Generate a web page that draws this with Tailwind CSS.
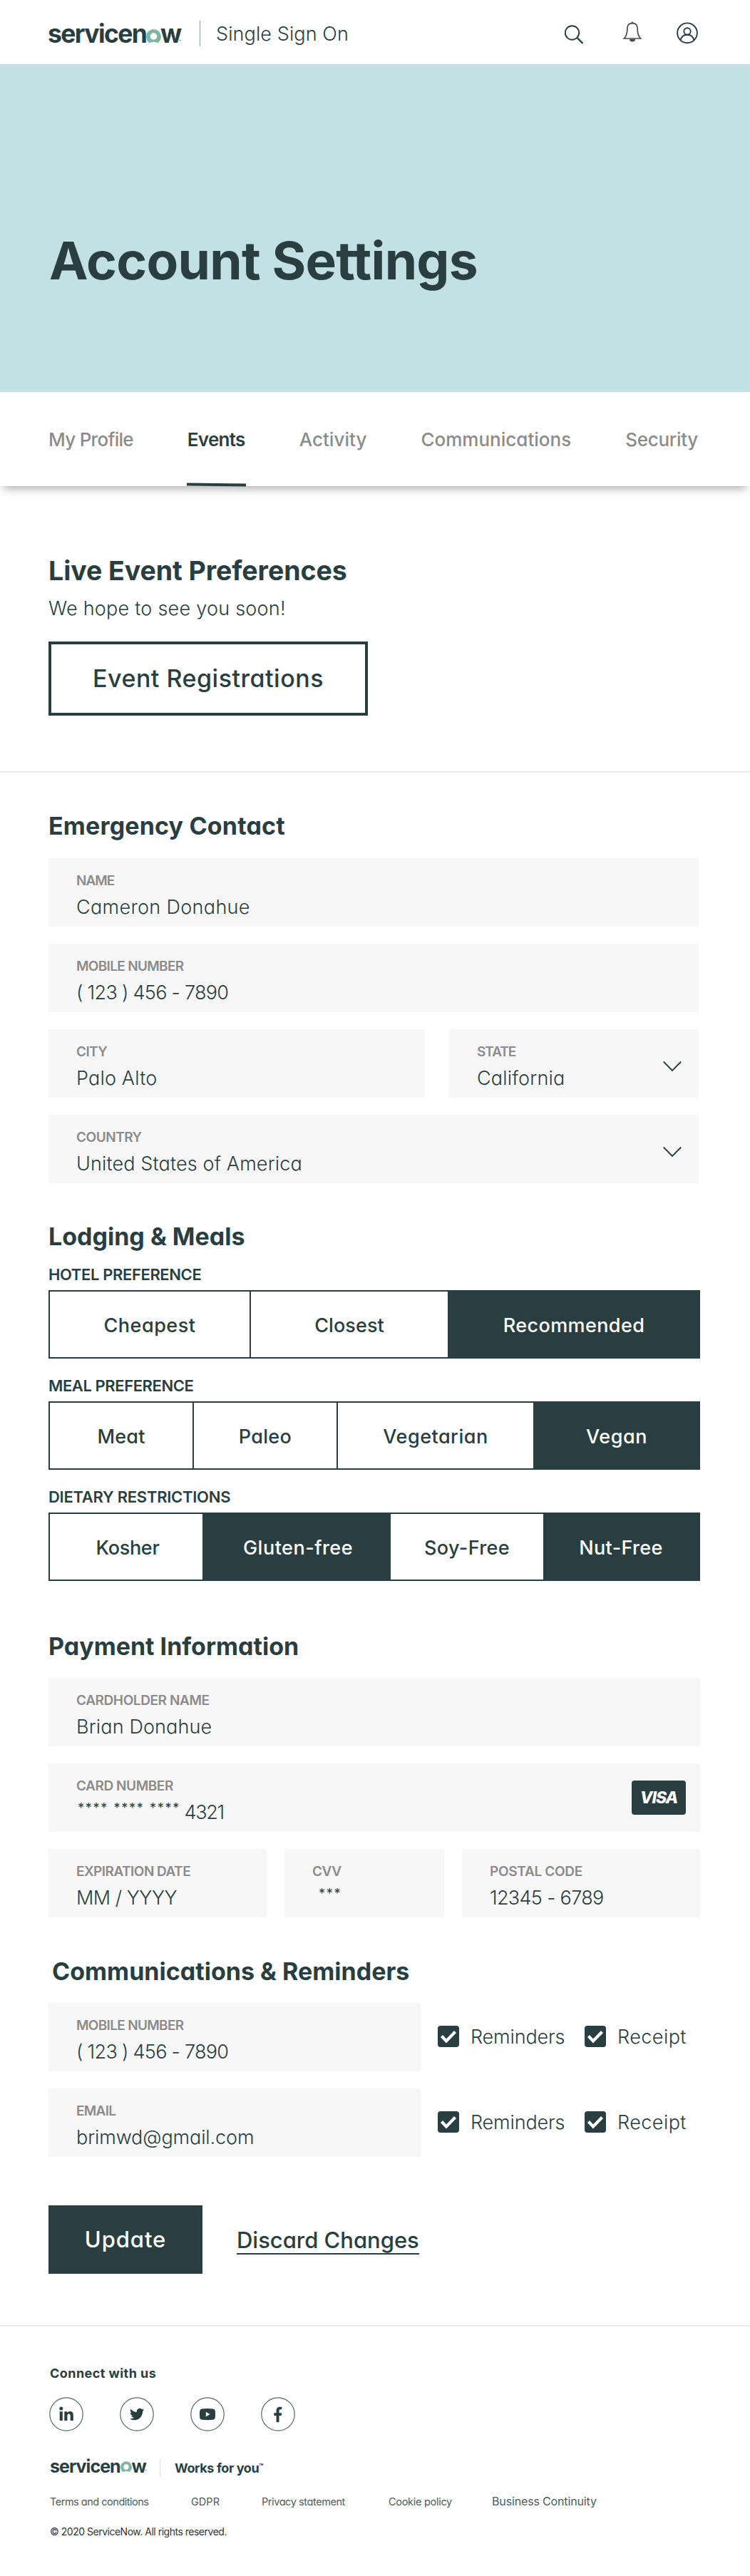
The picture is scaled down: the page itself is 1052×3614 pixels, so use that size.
<!DOCTYPE html>
<html lang="en">
<head>
<meta charset="utf-8">
<title>Account Settings</title>
<script src="https://cdn.jsdelivr.net/npm/@tailwindcss/browser@4"></script>
</head>
<body class="w-[1052px] bg-white font-['Inter',sans-serif] text-[#293e40] [font-feature-settings:'cv11'] [&_*]:whitespace-nowrap">

<!-- Header -->
<header class="flex h-[90px] items-start pl-[67px]">
  <div class="relative mt-7 flex w-[188px] text-[35.5px] leading-10 font-bold">
    <span class="w-[138px] tracking-[-1.6px]">servicen</span>
    <svg class="mt-[12px] h-[22px] w-[22px]" viewBox="0 0 22 22"><circle cx="11" cy="11.5" r="11" fill="#81b5a1"/><circle cx="11" cy="11" r="5" fill="#fff"/><ellipse cx="11" cy="22" rx="6" ry="2.8" fill="#fff"/><path d="M0 21.5h22v2H0z" fill="#fff"/></svg>
    <span class="-ml-px tracking-[-0.16px]">w</span>
    <span class="absolute top-[26px] left-[184px] text-[5px] leading-[8px] font-medium">™</span>
  </div>
  <div class="mt-[29px] ml-[25px] h-9 w-px bg-[#8f9c9d]"></div>
  <div class="mt-[32px] ml-[22px] text-[27px] leading-8 font-light tracking-[0.1px]">Single Sign On</div>
  <div class="mt-[28px] mr-[73px] ml-auto flex text-[#293e40]">
    <svg class="h-9 w-[26px]" viewBox="0 0 26 36" fill="none" stroke="currentColor" stroke-width="2"><circle cx="10.5" cy="18" r="9.7"/><path d="M17.5 25l8 8" stroke-width="2.4"/></svg>
    <svg class="ml-[55px] h-9 w-[28px] text-[#4a4a4a]" viewBox="0 0 28 36" fill="none" stroke="currentColor" stroke-width="1.7"><path d="M14 4.6C9.3 4.6 6.9 7.6 6.9 11.8C6.9 18 6 22.5 2.3 26H25.7C22 22.5 21.1 18 21.1 11.8C21.1 7.6 18.7 4.6 14 4.6Z"/><path d="M12.3 4.3a1.7 1.7 0 1 1 3.4 0zM10 27h8a4 3.6 0 0 1-8 0z" fill="currentColor" stroke="none"/></svg>
    <svg class="ml-[48px] h-9 w-[30px]" viewBox="0 0 30 36" fill="none" stroke="currentColor" stroke-width="1.9"><circle cx="15" cy="18.3" r="13.9"/><circle cx="15" cy="16" r="4.7"/><path d="M5.8 28.6C6.5 23.4 10.3 20.8 15 20.8S23.5 23.4 24.2 28.6"/></svg>
  </div>
</header>

<!-- Hero -->
<section class="h-[460px] bg-[#c3e0e5] pt-[236px] pl-[69px]">
  <h1 class="text-[73px] leading-[80px] font-bold tracking-[-0.75px]">Account Settings</h1>
</section>

<!-- Tabs -->
<nav class="relative flex h-[132px] justify-between pt-[52px] pr-[73px] pl-[68px] text-[26px] leading-[30px] font-medium text-[#8b8b8b] shadow-[0_9px_12px_-5px_rgba(0,0,0,0.3)]">
  <span class="tracking-[-0.72px]">My Profile</span>
  <span class="relative font-semibold tracking-[-0.7px] text-[#293e40]">Events<span class="absolute -right-px bottom-0 -left-px h-1 rotate-[0.6deg] bg-[#293e40]"></span></span>
  <span class="tracking-[0.04px]">Activity</span>
  <span class="tracking-[0.01px]">Communications</span>
  <span class="tracking-[-0.27px]">Security</span>
</nav>

<!-- Live events -->
<section class="px-[68px] pt-[97px] pb-[78px]">
  <h2 class="text-[37.5px] leading-[44px] font-bold tracking-[-0.07px]">Live Event Preferences</h2>
  <p class="mt-[15px] text-[27px] leading-8 font-light tracking-[0.24px]">We hope to see you soon!</p>
  <button class="mt-[30px] flex h-[104px] w-[448px] justify-center border-4 border-[#293e40] pt-[28px] text-[34px] leading-10 font-medium tracking-[0.5px]">Event Registrations</button>
</section>
<div class="h-0.5 bg-[#ebebeb]"></div>

<main class="px-[68px]">
  <!-- Emergency contact -->
  <h2 class="mt-[55px] text-[34px] leading-10 font-bold tracking-[0.17px]">Emergency Contact</h2>
  <div class="mt-[25px] flex w-[912px] flex-col gap-6 text-[27px] leading-8 font-light">
    <div class="h-24 bg-[#f7f7f7] pt-[22px] pl-[39px]">
      <div class="mb-[11px] text-[19px] leading-5 font-semibold tracking-[-1px] text-[#8b8b8b]">NAME</div>
      <div class="tracking-[0.33px]">Cameron Donahue</div>
    </div>
    <div class="h-24 bg-[#f7f7f7] pt-[22px] pl-[39px]">
      <div class="mb-[11px] text-[19px] leading-5 font-semibold tracking-[-0.68px] text-[#8b8b8b]">MOBILE NUMBER</div>
      <div class="tracking-[-0.7px]">( 123 ) 456 - 7890</div>
    </div>
    <div class="flex justify-between">
      <div class="h-24 w-[528px] bg-[#f7f7f7] pt-[22px] pl-[39px]">
        <div class="mb-[11px] text-[19px] leading-5 font-semibold tracking-[-0.6px] text-[#8b8b8b]">CITY</div>
        <div class="tracking-[0.18px]">Palo Alto</div>
      </div>
      <div class="flex h-24 w-[350px] justify-between bg-[#f7f7f7] pt-[22px] pr-6 pl-[39px]">
        <div>
          <div class="mb-[11px] text-[19px] leading-5 font-semibold tracking-[-1.05px] text-[#8b8b8b]">STATE</div>
          <div class="tracking-[0.18px]">California</div>
        </div>
        <svg class="mt-[22px] h-4 w-[26px]" viewBox="0 0 26 16" fill="none" stroke="currentColor" stroke-width="1.9"><path d="M.8 1.5L13 14L25.2 1.5"/></svg>
      </div>
    </div>
    <div class="flex h-24 justify-between bg-[#f7f7f7] pt-[22px] pr-6 pl-[39px]">
      <div>
        <div class="mb-[11px] text-[19px] leading-5 font-semibold tracking-[-0.47px] text-[#8b8b8b]">COUNTRY</div>
        <div class="tracking-[0.14px]">United States of America</div>
      </div>
      <svg class="mt-[22px] h-4 w-[26px]" viewBox="0 0 26 16" fill="none" stroke="currentColor" stroke-width="1.9"><path d="M.8 1.5L13 14L25.2 1.5"/></svg>
    </div>
  </div>

  <!-- Lodging and meals -->
  <h2 class="mt-[55px] text-[34px] leading-10 font-bold">Lodging &amp; Meals</h2>
  <div class="mt-[20px] flex w-[914px] flex-col gap-[25px]">
    <div>
      <h3 class="text-[22px] leading-[26px] font-semibold tracking-[-0.38px]">HOTEL PREFERENCE</h3>
      <div class="mt-[9px] flex h-24 divide-x-2 divide-[#293e40] border-2 border-[#293e40] text-[27px] font-medium *:flex *:items-center *:justify-center *:pt-[5px]">
        <div class="w-[282px] tracking-[0.5px]">Cheapest</div>
        <div class="w-[278px] tracking-[0.1px]">Closest</div>
        <div class="flex-1 bg-[#293e40] tracking-[0.4px] text-white">Recommended</div>
      </div>
    </div>
    <div>
      <h3 class="text-[22px] leading-[26px] font-semibold tracking-[-0.41px]">MEAL PREFERENCE</h3>
      <div class="mt-[9px] flex h-24 divide-x-2 divide-[#293e40] border-2 border-[#293e40] text-[27px] font-medium *:flex *:items-center *:justify-center *:pt-[5px]">
        <div class="w-[202px] tracking-[0.2px]">Meat</div>
        <div class="w-[202px] tracking-[0.3px]">Paleo</div>
        <div class="w-[276px] tracking-[0.5px]">Vegetarian</div>
        <div class="flex-1 bg-[#293e40] tracking-[0.6px] text-white">Vegan</div>
      </div>
    </div>
    <div>
      <h3 class="text-[22px] leading-[26px] font-semibold tracking-[-0.27px]">DIETARY RESTRICTIONS</h3>
      <div class="mt-[9px] flex h-24 border-2 border-[#293e40] text-[27px] font-medium *:flex *:items-center *:justify-center *:pt-[5px]">
        <div class="w-[214px] pl-1 tracking-[-0.3px]">Kosher</div>
        <div class="w-[264px] bg-[#293e40] pl-1 tracking-[0.5px] text-white">Gluten-free</div>
        <div class="w-[214px] tracking-[0.4px]">Soy-Free</div>
        <div class="flex-1 bg-[#293e40] tracking-[0.35px] text-white">Nut-Free</div>
      </div>
    </div>
  </div>

  <!-- Payment -->
  <h2 class="mt-[72px] text-[34px] leading-10 font-bold">Payment Information</h2>
  <div class="mt-[24px] flex w-[914px] flex-col gap-6 text-[27px] leading-8 font-light">
    <div class="h-24 bg-[#f7f7f7] pt-[22px] pl-[39px]">
      <div class="mb-[11px] text-[19px] leading-5 font-semibold tracking-[-0.4px] text-[#8b8b8b]">CARDHOLDER NAME</div>
      <div class="tracking-[0.14px]">Brian Donahue</div>
    </div>
    <div class="flex h-24 items-start justify-between bg-[#f7f7f7] pr-5 pl-[39px]">
      <div class="pt-[22px]">
        <div class="mb-[11px] text-[19px] leading-5 font-semibold tracking-[-0.43px] text-[#8b8b8b]">CARD NUMBER</div>
        <div class="flex pl-0.5">
          <span class="-mt-[6px] w-[50.5px] text-[18px] font-normal tracking-[1.7px]">****</span>
          <span class="-mt-[6px] w-[50.5px] text-[18px] font-normal tracking-[1.7px]">****</span>
          <span class="-mt-[6px] w-[48.5px] text-[18px] font-normal tracking-[1.7px]">****</span>
          <span class="tracking-[-1.29px]">4321</span>
        </div>
      </div>
      <div class="mt-6 flex h-12 w-[76px] items-center justify-center rounded bg-[#293e40] text-[23px] font-extrabold tracking-[-1.02px] text-white italic">VISA</div>
    </div>
    <div class="flex justify-between">
      <div class="h-24 w-[306px] bg-[#f7f7f7] pt-[22px] pl-[39px]">
        <div class="mb-[11px] text-[19px] leading-5 font-semibold tracking-[-0.53px] text-[#8b8b8b]">EXPIRATION DATE</div>
        <div class="tracking-[-0.47px]">MM / YYYY</div>
      </div>
      <div class="h-24 w-[224px] bg-[#f7f7f7] pt-[22px] pl-[39px]">
        <div class="mb-[11px] text-[19px] leading-5 font-semibold tracking-[-0.45px] text-[#8b8b8b]">CVV</div>
        <div class="-mt-[6px] pl-[9px] text-[18px] font-normal tracking-[1.7px]">***</div>
      </div>
      <div class="h-24 w-[334px] bg-[#f7f7f7] pt-[22px] pl-[39px]">
        <div class="mb-[11px] text-[19px] leading-5 font-semibold tracking-[-0.3px] text-[#8b8b8b]">POSTAL CODE</div>
        <div class="tracking-[-0.67px]">12345 - 6789</div>
      </div>
    </div>
  </div>

  <!-- Communications -->
  <h2 class="mt-[56px] pl-[5px] text-[34px] leading-10 font-bold tracking-[0.02px]">Communications &amp; Reminders</h2>
  <div class="mt-[24px] flex flex-col gap-6 text-[27px] leading-8 font-light">
    <div class="flex">
      <div class="h-24 w-[522px] bg-[#f7f7f7] pt-[22px] pl-[39px]">
        <div class="mb-[11px] text-[19px] leading-5 font-semibold tracking-[-0.68px] text-[#8b8b8b]">MOBILE NUMBER</div>
        <div class="tracking-[-0.7px]">( 123 ) 456 - 7890</div>
      </div>
      <label class="ml-6 flex w-[206px] pt-8"><svg class="mr-4 h-[30px] w-[30px]" viewBox="0 0 30 30"><rect width="30" height="30" rx="4" fill="#293e40"/><path d="M5.5 14.5l6.5 7L24.5 8.5" fill="none" stroke="#fff" stroke-width="4.2"/></svg><span class="tracking-[-0.15px]">Reminders</span></label>
      <label class="flex pt-8"><svg class="mr-4 h-[30px] w-[30px]" viewBox="0 0 30 30"><rect width="30" height="30" rx="4" fill="#293e40"/><path d="M5.5 14.5l6.5 7L24.5 8.5" fill="none" stroke="#fff" stroke-width="4.2"/></svg><span class="tracking-[0.44px]">Receipt</span></label>
    </div>
    <div class="flex">
      <div class="h-24 w-[522px] bg-[#f7f7f7] pt-[22px] pl-[39px]">
        <div class="mb-[11px] text-[19px] leading-5 font-semibold tracking-[-0.74px] text-[#8b8b8b]">EMAIL</div>
        <div class="tracking-[-0.1px]">brimwd@gmail.com</div>
      </div>
      <label class="ml-6 flex w-[206px] pt-8"><svg class="mr-4 h-[30px] w-[30px]" viewBox="0 0 30 30"><rect width="30" height="30" rx="4" fill="#293e40"/><path d="M5.5 14.5l6.5 7L24.5 8.5" fill="none" stroke="#fff" stroke-width="4.2"/></svg><span class="tracking-[-0.15px]">Reminders</span></label>
      <label class="flex pt-8"><svg class="mr-4 h-[30px] w-[30px]" viewBox="0 0 30 30"><rect width="30" height="30" rx="4" fill="#293e40"/><path d="M5.5 14.5l6.5 7L24.5 8.5" fill="none" stroke="#fff" stroke-width="4.2"/></svg><span class="tracking-[0.44px]">Receipt</span></label>
    </div>
  </div>

  <div class="mt-[68px] mb-[72px] flex h-24 items-start text-[31px]">
    <button class="h-24 w-[216px] bg-[#293e40] pt-px font-medium tracking-[0.9px] text-white">Update</button>
    <a class="mt-[31px] ml-[48px] border-b-2 border-[#293e40] leading-9 font-medium tracking-[-0.02px]">Discard Changes</a>
  </div>
</main>
<div class="h-0.5 bg-[#ebebeb]"></div>

<!-- Footer -->
<footer class="px-[70px] pt-[54px]">
  <div class="text-[18px] leading-6 font-bold tracking-[0.45px]">Connect with us</div>
  <div class="mt-[21px] -ml-px flex gap-[51px]">
    <svg class="h-12 w-12" viewBox="0 0 48 48" fill="#293e40"><circle cx="24" cy="24" r="23.2" fill="none" stroke="#56686a" stroke-width="1.2"/><circle cx="16.8" cy="16" r="2.5"/><path d="M14.7 20.3h4.1V33h-4.1zM21.3 20.3h3.9v1.8c.9-1.4 2.3-2.2 4.1-2.2 3.3 0 4.5 2.2 4.5 5.6V33h-4.1v-6.7c0-1.8-.6-2.9-2-2.9-1.5 0-2.3 1.1-2.3 2.9V33h-4.1z"/></svg>
    <svg class="h-12 w-12" viewBox="0 0 48 48" fill="#293e40"><circle cx="24" cy="24" r="23.2" fill="none" stroke="#56686a" stroke-width="1.2"/><path transform="translate(14 14) scale(.84)" d="M23.953 4.57a10 10 0 01-2.825.775 4.958 4.958 0 002.163-2.723c-.951.555-2.005.959-3.127 1.184a4.92 4.92 0 00-8.384 4.482C7.69 8.095 4.067 6.13 1.64 3.162a4.822 4.822 0 00-.666 2.475c0 1.71.87 3.213 2.188 4.096a4.904 4.904 0 01-2.228-.616v.06a4.923 4.923 0 003.946 4.827 4.996 4.996 0 01-2.212.085 4.936 4.936 0 004.604 3.417 9.867 9.867 0 01-6.102 2.105c-.39 0-.779-.023-1.17-.067a13.995 13.995 0 007.557 2.209c9.053 0 13.998-7.496 13.998-13.985 0-.21 0-.42-.015-.63A9.935 9.935 0 0024 4.59z"/></svg>
    <svg class="h-12 w-12" viewBox="0 0 48 48" fill="#293e40"><circle cx="24" cy="24" r="23.2" fill="none" stroke="#56686a" stroke-width="1.2"/><path d="M16.5 16.5Q24 15.5 31.5 16.5Q34.5 16.8 34.8 19.8Q35.3 24 34.8 28.5Q34.5 31.5 31.5 31.8Q24 32.6 16.5 31.8Q13.5 31.5 13.2 28.5Q12.7 24 13.2 19.8Q13.5 16.8 16.5 16.5Z"/><path d="M21.8 20.8v6.6l5.8-3.3z" fill="#fff"/></svg>
    <svg class="h-12 w-12" viewBox="0 0 48 48" fill="#293e40"><circle cx="24" cy="24" r="23.2" fill="none" stroke="#56686a" stroke-width="1.2"/><path d="M21.6 35.3V25.9H18.3V22.3h3.3v-2.8c0-3.7 2-5.7 5.4-5.7.9 0 1.7.1 2.3.2v3.3h-1.9c-1.5 0-1.9.8-1.9 2.1v2.9h3.7l-.6 3.6h-3.1v9.4z"/></svg>
  </div>
  <div class="mt-[34px] flex">
    <div class="relative flex w-[154px] text-[25px] leading-[30px] font-bold">
      <span class="w-[98.5px] tracking-[-0.96px]">servicen</span>
      <svg class="mt-[8px] h-4 w-4" viewBox="0 0 22 22"><circle cx="11" cy="11.5" r="11" fill="#81b5a1"/><circle cx="11" cy="11" r="5" fill="#fff"/><ellipse cx="11" cy="22" rx="6" ry="2.8" fill="#fff"/></svg>
      <span>w</span>
      <span class="absolute top-[19px] left-[133px] text-[4px] leading-[6px] font-medium">™</span>
    </div>
    <div class="mt-[5px] h-[25px] w-px bg-[#dcdcdc]"></div>
    <div class="relative mt-[3px] ml-[20px] text-[18px] leading-[30px] font-bold tracking-[-0.39px]">Works for you<span class="absolute top-[6px] left-[118px] text-[10px] leading-3 tracking-normal">™</span></div>
  </div>
  <div class="mt-[22px] flex h-5 items-start text-[14.5px] leading-5 text-[#4b5c5e]">
    <span class="w-[198px] tracking-[-0.49px]">Terms and conditions</span>
    <span class="w-[99px] tracking-[0.04px]">GDPR</span>
    <span class="w-[178px] tracking-[-0.42px]">Privacy statement</span>
    <span class="w-[145px] tracking-[-0.29px]">Cookie policy</span>
    <span class="-mt-px text-[16px] tracking-[-0.15px]">Business Continuity</span>
  </div>
  <div class="mt-[22px] text-[14px] leading-5 tracking-[-0.49px] text-[#333]">© 2020 ServiceNow. All rights reserved.</div>
</footer>
</body>
</html>
